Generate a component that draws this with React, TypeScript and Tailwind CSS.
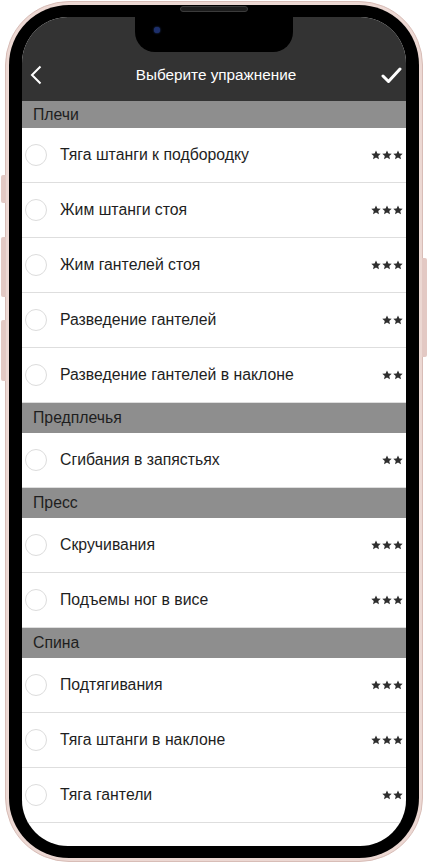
const sections = [
  {
    title: "Плечи",
    first: true,
    items: [
      { name: "Тяга штанги к подбородку", stars: 3 },
      { name: "Жим штанги стоя", stars: 3 },
      { name: "Жим гантелей стоя", stars: 3 },
      { name: "Разведение гантелей", stars: 2 },
      { name: "Разведение гантелей в наклоне", stars: 2 },
    ],
  },
  {
    title: "Предплечья",
    items: [{ name: "Сгибания в запястьях", stars: 2 }],
  },
  {
    title: "Пресс",
    items: [
      { name: "Скручивания", stars: 3 },
      { name: "Подъемы ног в висе", stars: 3 },
    ],
  },
  {
    title: "Спина",
    items: [
      { name: "Подтягивания", stars: 3 },
      { name: "Тяга штанги в наклоне", stars: 3 },
      { name: "Тяга гантели", stars: 2 },
    ],
  },
];

function Stars({ count }: { count: number }) {
  return (
    <div className="flex gap-[1px]">
      {Array.from({ length: count }).map((_, i) => (
        <svg key={i} className="w-[10px] h-[10px]" viewBox="0 0 24 24" fill="#2e2e2e">
          <path d="M12 1l3.4 7.2 7.9.9-5.9 5.3 1.7 7.8L12 18.2l-7.1 4 1.7-7.8L.7 9.1l7.9-.9z" />
        </svg>
      ))}
    </div>
  );
}

export default function App() {
  return (
    <div className="w-[428px] h-[865px] bg-white relative font-['Liberation_Sans',Arial,sans-serif]">
      {/* side buttons */}
      <div className="absolute left-[1px] top-[175px] w-[5px] h-[28px] rounded-l-[2px] bg-[#e3c9c4]" />
      <div className="absolute left-[1px] top-[237px] w-[5px] h-[60px] rounded-l-[2px] bg-[#e3c9c4]" />
      <div className="absolute left-[1px] top-[320px] w-[5px] h-[61px] rounded-l-[2px] bg-[#e3c9c4]" />
      <div className="absolute right-[1px] top-[258px] w-[5px] h-[99px] rounded-r-[2px] bg-[#e3c9c4]" />

      <div className="pt-[1px] pl-[5px]">
        {/* phone frame */}
        <div className="w-[418px] h-[861px] rounded-[64px] bg-[#ecd8d3] border border-[#d8bdb7] p-[3px]">
          <div className="relative w-full h-full rounded-[60px] bg-black pt-[12px] px-[13px] pb-[12px]">
            {/* speaker */}
            <div className="absolute left-1/2 -translate-x-1/2 top-[1px] w-[68px] h-[6px] rounded-full bg-[#1c1c1c] border border-[#3b3b3b]" />

            {/* screen */}
            <div className="relative w-full h-full rounded-[46px] overflow-hidden bg-white flex flex-col">
              {/* notch */}
              <div className="absolute left-1/2 -translate-x-1/2 top-0 w-[158px] h-[35px] bg-black rounded-b-[20px]">
                <div className="absolute left-[19px] top-[10px] w-[6px] h-[6px] rounded-full bg-[#1d2f6b] shadow-[0_0_2px_#3050a0]" />
              </div>

              {/* header */}
              <div className="h-[84px] bg-[#333333] flex flex-col justify-end shrink-0">
                <div className="h-[52px] grid grid-cols-[1fr_auto_1fr] items-center pl-[8px] pr-[4px]">
                  <svg className="w-[12px] h-[20px]" viewBox="0 0 12 20" fill="none" stroke="white" strokeWidth={2}>
                    <path d="M10.5 1.5L2 10l8.5 8.5" />
                  </svg>
                  <span className="text-white text-[15.3px]">Выберите упражнение</span>
                  <svg className="w-[21px] h-[17px] justify-self-end" viewBox="0 0 21 17" fill="none" stroke="white" strokeWidth={3} strokeLinecap="round" strokeLinejoin="round">
                    <path d="M2 9l5.5 5.5L19 2" />
                  </svg>
                </div>
              </div>

              {/* list */}
              {sections.map((section, si) => (
                <div key={si}>
                  <div
                    className={
                      section.first
                        ? "h-[27px] bg-[#8e8e8e] flex items-center pl-[11px] text-[15.8px] text-[#1e1e1e]"
                        : "h-[30px] bg-[#8e8e8e] flex items-center pl-[11px] text-[15.8px] text-[#1e1e1e]"
                    }
                  >
                    {section.title}
                  </div>
                  {section.items.map((item, ii) => (
                    <div
                      key={ii}
                      className="h-[55px] flex items-center border-b border-[#dedede] pl-[3px] pr-[3px]"
                    >
                      <div className="w-[22px] h-[22px] rounded-full border border-[#dcdcdc] shrink-0" />
                      <span className="ml-[13px] flex-1 text-[15.8px] text-[#1e1e1e]">{item.name}</span>
                      <Stars count={item.stars} />
                    </div>
                  ))}
                </div>
              ))}
            </div>
          </div>
        </div>
      </div>
    </div>
  );
}
